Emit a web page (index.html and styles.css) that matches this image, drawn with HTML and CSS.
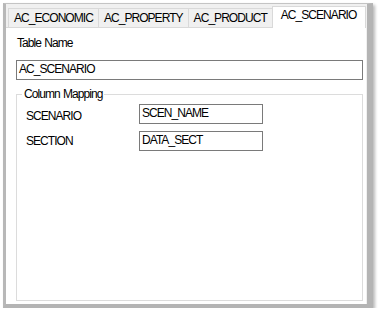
FILE: index.html
```html
<!DOCTYPE html>
<html>
<head>
<meta charset="utf-8">
<link rel="stylesheet" href="styles.css">
</head>
<body>
<div class="window">
  <div class="tabstrip">
    <div class="tab">AC_ECONOMIC</div>
    <div class="tab">AC_PROPERTY</div>
    <div class="tab">AC_PRODUCT</div>
    <div class="tab selected">AC_SCENARIO</div>
  </div>
  <div class="page">
    <div class="label">Table Name</div>
    <div class="textbox wide">AC_SCENARIO</div>
    <fieldset class="group">
      <legend>Column Mapping</legend>
      <div class="mapping">
        <div class="map-label">SCENARIO</div>
        <div class="textbox">SCEN_NAME</div>
        <div class="map-label second">SECTION</div>
        <div class="textbox">DATA_SECT</div>
      </div>
    </fieldset>
  </div>
</div>
</body>
</html>
```
FILE: styles.css
```css
html, body {
  margin: 0;
  padding: 0;
  background: #ffffff;
}
body {
  font-family: "Liberation Sans", Arial, sans-serif;
  font-size: 12px;
  letter-spacing: -0.95px;
  word-spacing: 1px;
  color: #000000;
}
.window {
  margin: 3px 0 0 3px;
  width: 361px;
  height: 300px;
  border-left: 3px solid #b8b8b8;
  border-top: 1px solid #c4c4c4;
  border-right: 6px solid #b4b4b4;
  border-bottom: 4px solid #b4b4b4;
  box-shadow: 2px 2px 3px rgba(0, 0, 0, 0.28);
  background: #f0f0f0;
  display: flex;
  flex-direction: column;
}
.tabstrip {
  height: 23px;
  display: flex;
  align-items: flex-end;
  padding-left: 2px;
  position: relative;
  z-index: 1;
}
.tab {
  height: 18px;
  line-height: 18px;
  padding: 0 5px 0 5px;
  border: 1px solid #d9d9d9;
  border-bottom: none;
  border-right: none;
  background: #f0f0f0;
}
.tab.selected {
  height: 21px;
  line-height: 16px;
  padding: 0 9px 0 8px;
  border-right: 1px solid #d9d9d9;
  background: #ffffff;
  margin-bottom: -1px;
}
.page {
  flex: 1;
  background: #ffffff;
  border-top: 1px solid #d9d9d9;
  display: flex;
  flex-direction: column;
  padding: 8px 5px 3px 10px;
  margin-right: 1px;
}
.label {
  line-height: 14px;
  padding-left: 1px;
}
.textbox {
  box-sizing: border-box;
  height: 20px;
  border: 1px solid #7a7a7a;
  line-height: 16px;
  padding-left: 2px;
  background: #ffffff;
}
.textbox.wide {
  margin-top: 10px;
  width: 347px;
}
.group {
  flex: 1;
  margin: 7px 0 0 0;
  width: 347px;
  box-sizing: border-box;
  border: 1px solid #dcdcdc;
  padding: 3px 0 0 5px;
  min-width: 0;
}
.group legend {
  padding: 0 2px;
  line-height: 14px;
}
.mapping {
  display: grid;
  grid-template-columns: 113px 124px;
  row-gap: 5px;
  padding-left: 4px;
}
.map-label {
  line-height: 20px;
  padding-top: 2px;
}
.map-label.second {
  padding-top: 0;
}
```
